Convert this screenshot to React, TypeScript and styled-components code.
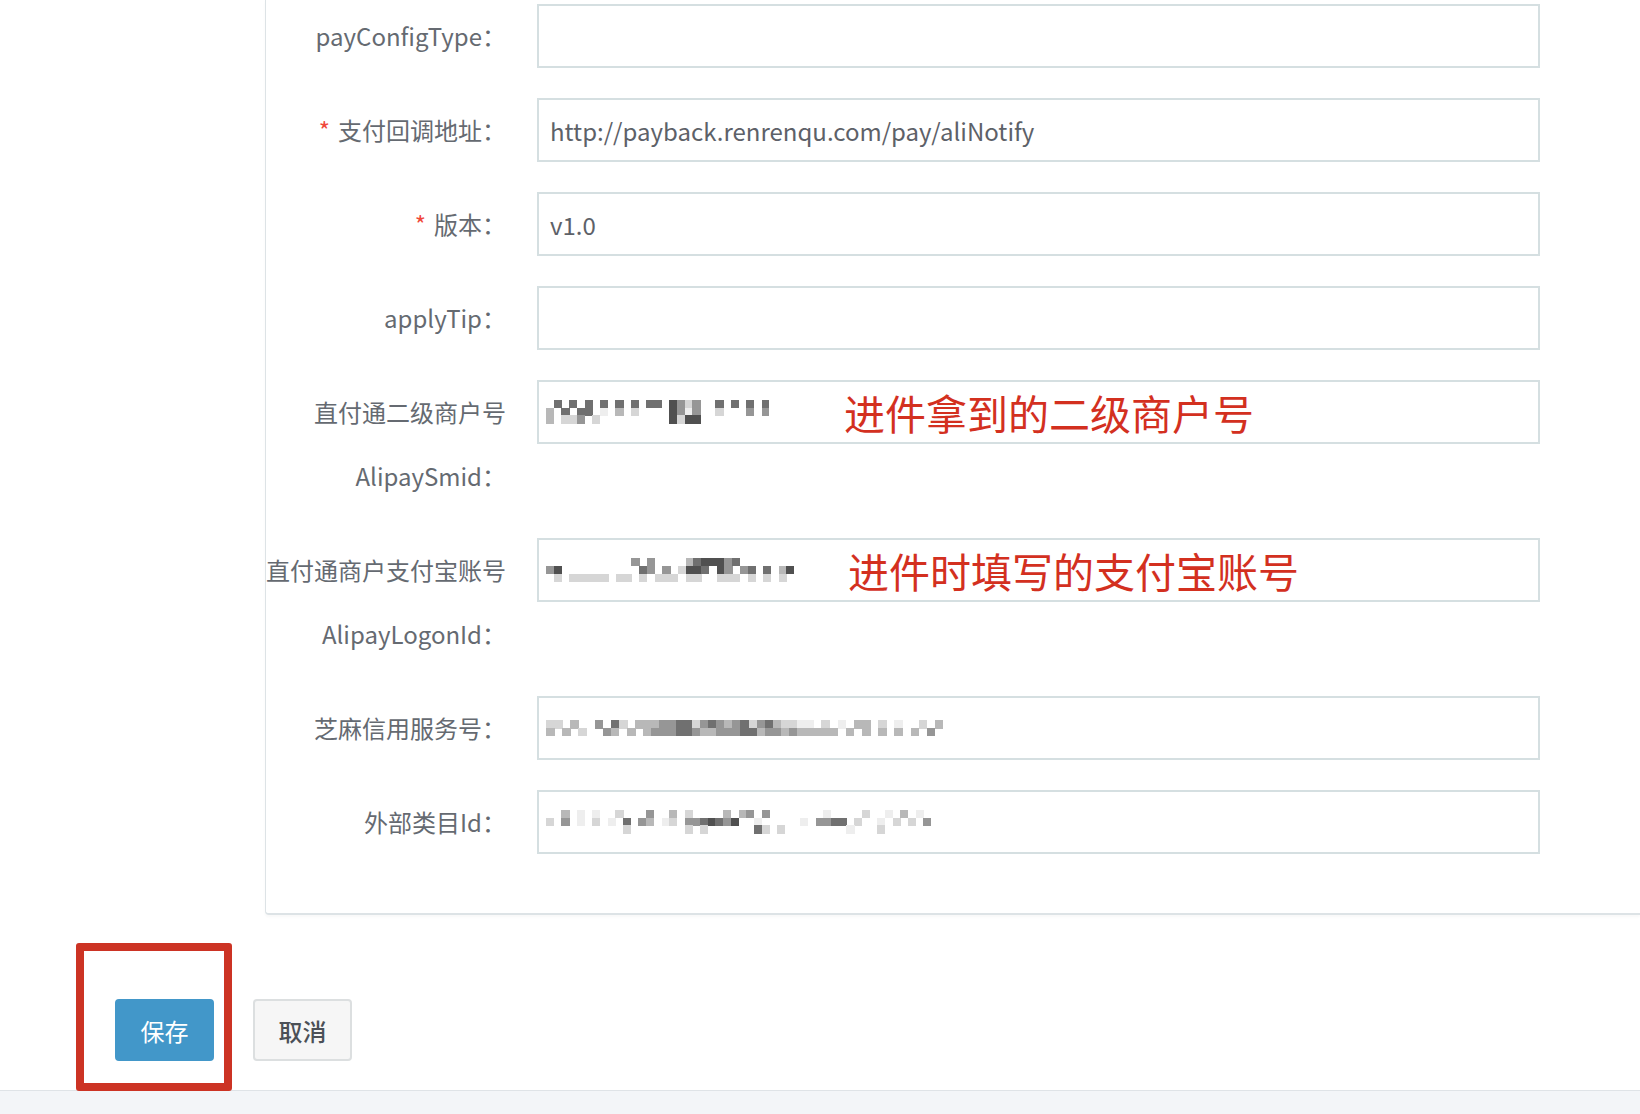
import React from "react";
import styled, { createGlobalStyle } from "styled-components";

const GlobalStyle = createGlobalStyle`
  html, body {
    margin: 0;
    padding: 0;
    background: #fff;
  }
  body {
    font-family: "Noto Sans CJK SC", "Noto Sans", sans-serif;
  }
`;

const Page = styled.div`
  width: 1640px;
  height: 1114px;
  display: flex;
  flex-direction: column;
  overflow: hidden;
  background: #fff;
`;

const Main = styled.div`
  flex: 1;
  display: flex;
  flex-direction: column;
`;

const Panel = styled.div`
  margin-left: 265px;
  padding: 4px 0 29px;
  border-left: 1px solid #dde3e6;
  border-bottom: 2px solid #dde3e6;
  border-bottom-left-radius: 4px;
  box-shadow: 0 2px 3px rgba(0, 0, 0, 0.03);
`;

const Row = styled.div`
  display: flex;
  align-items: flex-start;
  margin-bottom: 30px;
`;

const Label = styled.label`
  flex: none;
  width: 240px;
  padding-right: 31px;
  text-align: right;
  font-size: 24px;
  line-height: 64px;
  color: #656a71;
  white-space: nowrap;
`;

const Required = styled.span`
  color: #f0473a;
  margin-right: 8px;
`;

const Field = styled.div`
  position: relative;
  box-sizing: border-box;
  flex: none;
  width: 1003px;
  height: 64px;
  border: 2px solid #d5dfe1;
  padding: 0 11px;
  display: flex;
  align-items: center;
  font-size: 24px;
  color: #5d6168;
  white-space: nowrap;
`;

const Note = styled.span<{ $left: number }>`
  position: absolute;
  left: ${({ $left }) => $left}px;
  top: 50%;
  transform: translateY(-50%);
  font-size: 41px;
  line-height: 41px;
  font-weight: 400;
  color: #d3301f;
  white-space: nowrap;
`;

const MosaicSvg = styled.svg`
  display: block;
  flex: none;
  margin-left: -4px;
`;

const Actions = styled.div`
  display: flex;
  gap: 39px;
  padding-left: 115px;
  margin-top: 84px;
`;

const Marked = styled.div`
  position: relative;
`;

const Highlight = styled.div`
  position: absolute;
  left: -39px;
  top: -56px;
  width: 156px;
  height: 148px;
  box-sizing: border-box;
  border: 8px solid #cc3324;
  border-radius: 3px;
  z-index: 1;
  pointer-events: none;
`;

const Button = styled.button<{ $primary?: boolean }>`
  box-sizing: border-box;
  width: 99px;
  height: 62px;
  padding: 0;
  border-radius: 4px;
  font-family: inherit;
  font-size: 24px;
  cursor: pointer;
  border: 2px solid ${({ $primary }) => ($primary ? "#4297c9" : "#dcdfe0")};
  background: ${({ $primary }) => ($primary ? "#4297c9" : "#f6f6f6")};
  color: ${({ $primary }) => ($primary ? "#fff" : "#4b5057")};
  font-weight: ${({ $primary }) => ($primary ? 400 : 500)};
`;

const BottomBar = styled.div`
  height: 23px;
  border-top: 1px solid #dfe3e7;
  background: #f3f5f8;
`;

const shades: Record<string, string> = {
  "1": "#eeeeee",
  "2": "#d6d6d6",
  "3": "#b8b8b8",
  "4": "#969696",
  "5": "#707070",
  "6": "#505050",
};

interface mosaicProps {
  rows: string[];
  cell: number;
}

// pixelated (blurred) values from the screenshot
const Mosaic = ({ rows, cell }: mosaicProps) => {
  const cols = Math.max(...rows.map((r) => r.length));
  return (
    <MosaicSvg
      width={cols * cell}
      height={rows.length * cell}
      shapeRendering="crispEdges"
    >
      {rows.flatMap((r, y) =>
        r.split("").map((c, x) =>
          shades[c] ? (
            <rect
              key={`${x}-${y}`}
              x={x * cell}
              y={y * cell}
              width={cell + 0.5}
              height={cell + 0.5}
              fill={shades[c]}
            />
          ) : null
        )
      )}
    </MosaicSvg>
  );
};

interface rowData {
  label: string[];
  required?: boolean;
  value?: string;
  mosaic?: mosaicProps;
  note?: { text: string; left: number };
}

const rows: rowData[] = [
  { label: ["payConfigType："] },
  {
    label: ["支付回调地址："],
    required: true,
    value: "http://payback.renrenqu.com/pay/aliNotify",
  },
  { label: ["版本："], required: true, value: "v1.0" },
  { label: ["applyTip："] },
  {
    label: ["直付通二级商户号", "AlipaySmid："],
    mosaic: {
      cell: 7.7,
      rows: [
        ".5.5.5.5.5.5.55.6424..5.5.5.5",
        "3.5.55.1.3.2....6414..2...4.4",
        "3.224.2.........6266.........",
      ],
    },
    note: { text: "进件拿到的二级商户号", left: 305 },
  },
  {
    label: ["直付通商户支付宝账号", "AlipayLogonId："],
    mosaic: {
      cell: 7.75,
      rows: [
        "...........4.4....3566645.......",
        "46..........54.4.2665.64.45.5.36",
        ".2.22222.22.2.222.22..222.2.2.2.",
      ],
    },
    note: { text: "进件时填写的支付宝账号", left: 309 },
  },
  {
    label: ["芝麻信用服务号："],
    mosaic: {
      cell: 8.1,
      rows: [
        "22.3..4.52.3334455245434524532211.2.1.33.2.1..2.3",
        "3.3.2..43.3.344455433444553443433333.3.3.3.3.3.4.",
      ],
    },
  },
  {
    label: ["外部类目Id："],
    mosaic: {
      cell: 7.7,
      rows: [
        "..3.1.1..2...4..3.2....3.34.4.......1....2..1.3.1.",
        "2.4.1.2.1.5.43.12.4456546..1.....1.4455.2..1.2.2.4",
        "..........2.......2.2......52.2........1...2......",
      ],
    },
  },
];

const App = () => {
  return (
    <>
      <GlobalStyle />
      <Page>
        <Main>
          <Panel>
            {rows.map((row, i) => (
              <Row key={i}>
                <Label>
                  {row.required && <Required>*</Required>}
                  {row.label.map((line, j) => (
                    <React.Fragment key={j}>
                      {j > 0 && <br />}
                      {line}
                    </React.Fragment>
                  ))}
                </Label>
                <Field>
                  {row.value}
                  {row.mosaic && <Mosaic {...row.mosaic} />}
                  {row.note && (
                    <Note $left={row.note.left}>{row.note.text}</Note>
                  )}
                </Field>
              </Row>
            ))}
          </Panel>
          <Actions>
            <Marked>
              <Highlight />
              <Button $primary>保存</Button>
            </Marked>
            <Button>取消</Button>
          </Actions>
        </Main>
        <BottomBar />
      </Page>
    </>
  );
};

export default App;
